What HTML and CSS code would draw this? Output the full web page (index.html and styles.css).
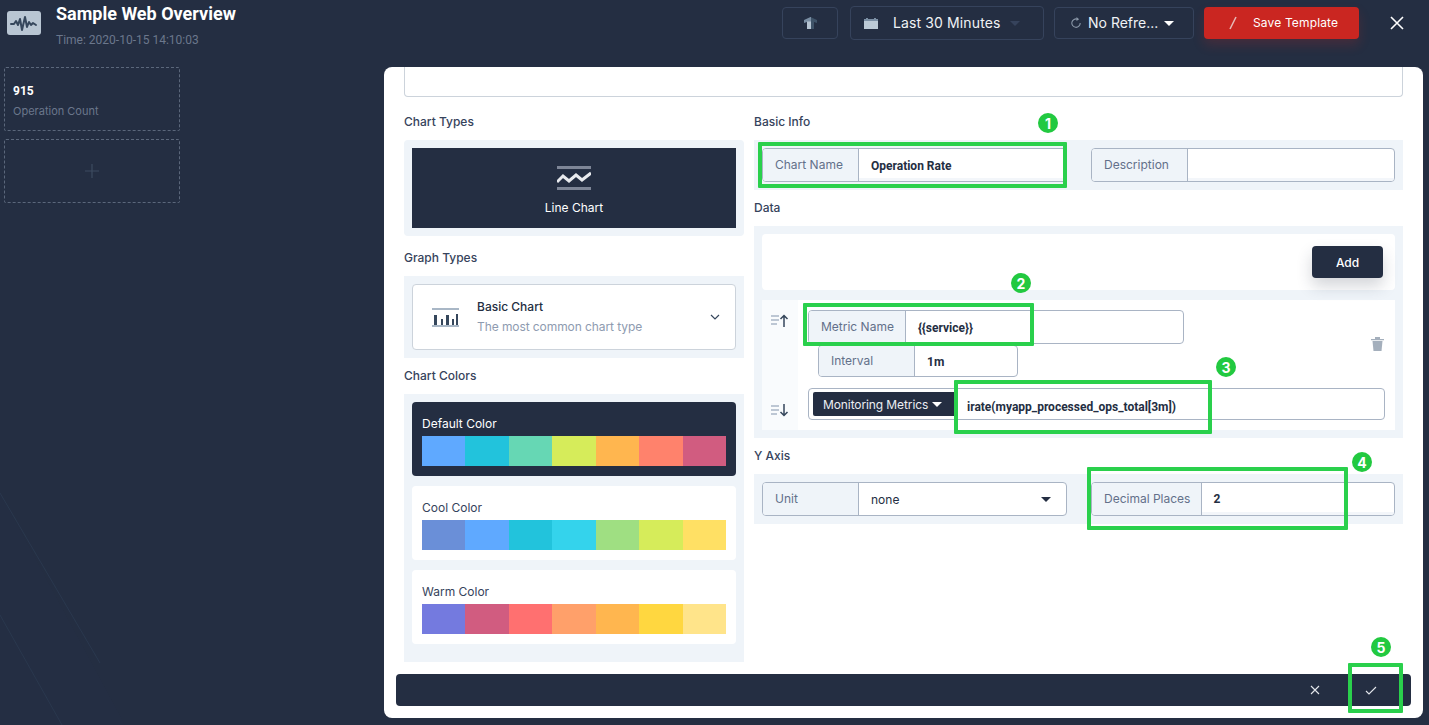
FILE: index.html
```html
<!DOCTYPE html>
<html lang="en">
<head>
  <meta charset="UTF-8">
  <title>Sample Web Overview</title>
  <link rel="stylesheet" href="styles.css">
</head>
<body>

  <!-- faint diagonal lines behind the page -->
  <svg class="bg-lines" width="380" height="260" viewBox="0 0 380 260">
    <polygon points="0,28 125,260 0,260" fill="#25304a" opacity="0.15"/>
    <line x1="0" y1="28" x2="100" y2="198" stroke="#2a384e"/>
    <line x1="0" y1="150" x2="62" y2="260" stroke="#2a384e"/>
  </svg>

  <header class="topbar">
    <div class="brand">
      <span class="brand-logo">
        <svg width="34" height="24" viewBox="0 0 34 24">
          <rect width="34" height="24" rx="3" fill="#b9c6d3"/>
          <path d="M4 13h3l2-3 2 4 2-6 2 11 3-13 2 10 2-5 2 3 2-2 3 2" fill="none" stroke="#36475c" stroke-width="2" stroke-linecap="round" stroke-linejoin="round"/>
        </svg>
      </span>
      <div>
        <h1 class="brand-title">Sample Web Overview</h1>
        <p class="brand-time">Time: 2020-10-15 14:10:03</p>
      </div>
    </div>
    <div class="actions">
      <button class="tool-btn upload-btn">
        <svg width="13" height="12" viewBox="0 0 13 12">
          <path d="M6.500 0L13 3v3l-3-1v7H6.500z" fill="#3f5368"/>
          <path d="M6.500 0L0 3v3l3-1v1h4V0z" fill="#7a8ea3"/>
          <path d="M3 4.500h4V12H3z" fill="#b6c4d2"/>
        </svg>
      </button>
      <button class="tool-btn time-btn">
        <svg width="14" height="11" viewBox="0 0 14 11">
          <path d="M2 0h2v2H2zM10 0h2v2h-2z" fill="#7a8ea3"/>
          <rect y="1" width="14" height="2" fill="#7a8ea3"/>
          <rect y="3" width="14" height="8" fill="#bccad6"/>
        </svg>
        <span class="time-text">Last 30 Minutes</span>
        <span class="caret caret-dim"></span>
      </button>
      <button class="tool-btn refresh-btn">
        <svg width="12" height="12" viewBox="0 0 12 12">
          <path d="M7.500 2.200A4.200 4.200 0 1 0 10.200 6" fill="none" stroke="#8a97a8" stroke-width="1.1"/>
          <path d="M6.500 0l2.600 2.200L6.500 4z" fill="#8a97a8"/>
        </svg>
        <span class="btn-text">No Refre...</span>
        <span class="caret"></span>
      </button>
      <button class="save-btn">
        <svg width="10" height="14" viewBox="0 0 10 14">
          <path d="M8 1L2 13" stroke="#e6b9b6" stroke-width="1.6"/>
        </svg>
        <span class="btn-text">Save Template</span>
      </button>
      <button class="close-btn">
        <svg width="16" height="16" viewBox="0 0 16 16">
          <path d="M2 2l12 12M14 2L2 14" stroke="#fff" stroke-width="1.6"/>
        </svg>
      </button>
    </div>
  </header>

  <main class="main">
    <aside class="sidebar">
      <div class="side-card">
        <strong class="side-num">915</strong>
        <span class="side-name">Operation Count</span>
      </div>
      <div class="side-card side-add">
        <svg width="16" height="16" viewBox="0 0 16 16">
          <path d="M8 1v14M1 8h14" stroke="#3d4b60" stroke-width="1.2"/>
        </svg>
      </div>
    </aside>

    <section class="modal">
      <div class="top-input"></div>

      <div class="modal-body">
        <div class="col-left">
          <h3 class="section-title">Chart Types</h3>
          <div class="panel panel-round">
            <div class="type-card">
              <svg width="34" height="24" viewBox="0 0 34 24">
                <rect width="34" height="3" fill="#7d8596"/>
                <rect y="21" width="34" height="3" fill="#7d8596"/>
                <path d="M0 16l6-6 6 5 7-6 6 5 9-7" fill="none" stroke="#e8eaee" stroke-width="3"/>
              </svg>
              <span>Line Chart</span>
            </div>
          </div>

          <h3 class="section-title title-graph">Graph Types</h3>
          <div class="panel">
            <div class="graph-card">
              <svg class="graph-icon" width="27" height="19" viewBox="0 0 27 19">
                <rect width="27" height="2" fill="#a9b7c6"/>
                <rect y="17" width="27" height="2" fill="#a9b7c6"/>
                <path d="M2 7h3v10H2zM9 11h2v6H9zM14 7h3v10h-3zM20 11h2v6h-2zM24 6h2v11h-2z" fill="#36475c"/>
              </svg>
              <div class="graph-text">
                <span class="graph-name">Basic Chart</span>
                <span class="graph-desc">The most common chart type</span>
              </div>
              <svg width="10" height="6" viewBox="0 0 10 6">
                <path d="M1 1l4 4 4-4" fill="none" stroke="#36475c" stroke-width="1.2"/>
              </svg>
            </div>
          </div>

          <h3 class="section-title">Chart Colors</h3>
          <div class="panel panel-colors">
            <div class="color-card color-card-on">
              <span class="color-name">Default Color</span>
              <div class="swatches">
                <i class="sw-blue"></i><i class="sw-teal"></i><i class="sw-mint"></i><i class="sw-lime"></i><i class="sw-orange"></i><i class="sw-coral"></i><i class="sw-rose"></i>
              </div>
            </div>
            <div class="color-card">
              <span class="color-name">Cool Color</span>
              <div class="swatches">
                <i class="sw-steel"></i><i class="sw-blue"></i><i class="sw-teal"></i><i class="sw-cyan"></i><i class="sw-green"></i><i class="sw-lime"></i><i class="sw-yellow"></i>
              </div>
            </div>
            <div class="color-card">
              <span class="color-name">Warm Color</span>
              <div class="swatches">
                <i class="sw-violet"></i><i class="sw-rose"></i><i class="sw-red"></i><i class="sw-peach"></i><i class="sw-orange"></i><i class="sw-gold"></i><i class="sw-cream"></i>
              </div>
            </div>
          </div>
        </div>

        <div class="col-right">
          <h3 class="section-title">Basic Info</h3>
          <div class="panel field-row">
            <div class="field">
              <span class="field-label">Chart Name</span>
              <span class="field-value value-input">Operation Rate</span>
            </div>
            <div class="field">
              <span class="field-label">Description</span>
              <span class="field-value value-input"></span>
            </div>
          </div>

          <h3 class="section-title">Data</h3>
          <div class="panel panel-data">
            <div class="add-row">
              <button class="add-btn">Add</button>
            </div>
            <div class="metric-row">
              <div class="sort-strip">
                <svg width="18" height="13" viewBox="0 0 18 13">
                  <path d="M0 2h8M0 6h8M0 10h6" stroke="#a9b7c6" stroke-width="1.4"/>
                  <path d="M13 13V2M9.500 5L13 1.500 16.500 5" fill="none" stroke="#36475c" stroke-width="1.5"/>
                </svg>
                <svg width="18" height="13" viewBox="0 0 18 13">
                  <path d="M0 2h8M0 6h8M0 10h6" stroke="#a9b7c6" stroke-width="1.4"/>
                  <path d="M13 0v11M9.500 8l3.500 3.500L16.500 8" fill="none" stroke="#36475c" stroke-width="1.5"/>
                </svg>
              </div>
              <div class="metric-fields">
                <div class="metric-top">
                  <div class="metric-pair">
                    <div class="field field-metric">
                      <span class="field-label">Metric Name</span>
                      <span class="field-value">{{service}}</span>
                    </div>
                    <div class="field field-interval">
                      <span class="field-label">Interval</span>
                      <span class="field-value">1m</span>
                    </div>
                  </div>
                  <svg class="trash" width="13" height="14" viewBox="0 0 13 14">
                    <path d="M0 2h13v1.300H0zM4 0h5v2H4z" fill="#a4afbc"/>
                    <path d="M1.500 4h10l-1 10h-8z" fill="#a4afbc"/>
                  </svg>
                </div>
                <div class="field field-query">
                  <button class="query-btn">Monitoring Metrics <span class="caret"></span></button>
                  <span class="query-value">irate(myapp_processed_ops_total[3m])</span>
                </div>
              </div>
            </div>
          </div>

          <h3 class="section-title">Y Axis</h3>
          <div class="panel field-row">
            <div class="field">
              <span class="field-label">Unit</span>
              <span class="field-value value-select">none <span class="caret caret-dark"></span></span>
            </div>
            <div class="field">
              <span class="field-label">Decimal Places</span>
              <span class="field-value value-input value-num">2</span>
            </div>
          </div>
        </div>
      </div>

      <footer class="modal-foot">
        <svg width="10" height="10" viewBox="0 0 10 10">
          <path d="M1 1l8 8M9 1L1 9" stroke="#e4e7ec" stroke-width="1.1"/>
        </svg>
        <svg class="foot-ok" width="12" height="9" viewBox="0 0 12 9">
          <path d="M1 5l3 3 7-7" fill="none" stroke="#e4e7ec" stroke-width="1.1"/>
        </svg>
      </footer>

      <!-- green tutorial marks on top of the form -->
      <div class="mark mark-1"></div>
      <div class="mark mark-2"></div>
      <div class="mark mark-3"></div>
      <div class="mark mark-4"></div>
      <div class="mark mark-5"></div>
      <span class="badge badge-1">1</span>
      <span class="badge badge-2">2</span>
      <span class="badge badge-3">3</span>
      <span class="badge badge-4">4</span>
      <span class="badge badge-5">5</span>
    </section>
  </main>

</body>
</html>
```

FILE: styles.css
```css
* {
  box-sizing: border-box;
}

html, body {
  height: 100%;
}

body {
  margin: 0;
  background-color: #242e42;
  font-family: "Inter", "Liberation Sans", sans-serif;
  font-size: 12px;
  color: #242e42;
  overflow: hidden;
  position: relative;
}

button {
  font-family: inherit;
  cursor: pointer;
}

svg {
  display: block;
  flex: none;
}

.bg-lines {
  position: absolute;
  left: 0;
  bottom: 0;
}

/* top bar */
.topbar {
  position: relative;
  height: 67px;
  display: flex;
  justify-content: space-between;
  align-items: flex-start;
  padding-left: 7px;
}

.brand {
  display: flex;
  gap: 15px;
}

.brand-logo {
  margin-top: 11px;
}

.brand-title {
  margin: 3px 0 0;
  font-family: "Roboto", sans-serif;
  font-size: 18px;
  line-height: 22px;
  font-weight: 700;
  color: #fff;
}

.brand-time {
  margin: 7px 0 0;
  font-family: "Roboto", sans-serif;
  font-size: 12px;
  line-height: 16px;
  color: #6b778c;
}

.actions {
  display: flex;
  align-items: center;
  height: 46px;
}

.tool-btn {
  height: 32px;
  display: flex;
  align-items: center;
  background: transparent;
  border: 1px solid #36435c;
  border-radius: 4px;
  color: #f0f2f5;
  font-size: 14px;
  padding: 0;
}

.upload-btn {
  width: 56px;
  justify-content: center;
  margin-right: 12px;
}

.time-btn {
  width: 194px;
  height: 34px;
  padding-left: 13px;
  margin-right: 10px;
}

.time-text {
  margin: 0 10px 2px 15px;
  letter-spacing: 0.12px;
}

.btn-text {
  margin-bottom: 2px;
}

.refresh-btn {
  width: 140px;
  padding-left: 15px;
  gap: 6px;
  margin-right: 10px;
}

.save-btn {
  width: 155px;
  height: 32px;
  display: flex;
  align-items: center;
  gap: 15px;
  padding: 0 0 0 24px;
  border: none;
  border-radius: 4px;
  background-color: #ca2621;
  color: #fff;
  font-size: 12px;
  letter-spacing: 0.15px;
  box-shadow: 0 6px 12px rgba(202, 38, 33, 0.2);
}

.close-btn {
  width: 16px;
  height: 16px;
  padding: 0;
  margin: 0 24px 0 30px;
  background: none;
  border: none;
}

.caret {
  display: inline-block;
  width: 0;
  height: 0;
  border-left: 5px solid transparent;
  border-right: 5px solid transparent;
  border-top: 5px solid #fff;
}

.caret-dim {
  border-top-color: #36435c;
}

.caret-dark {
  border-top-color: #242e42;
}

/* page body */
.main {
  position: relative;
  height: 651px;
  display: flex;
  justify-content: space-between;
  padding: 0 6px 0 4px;
}

.sidebar {
  width: 176px;
  display: flex;
  flex-direction: column;
  gap: 8px;
}

.side-card {
  height: 64px;
  border: 1px dashed #5b677b;
  border-radius: 2px;
  padding: 15px 8px 0;
  display: flex;
  flex-direction: column;
  gap: 5px;
}

.side-num {
  color: #fff;
  font-family: "Roboto", sans-serif;
  font-size: 12px;
  line-height: 16px;
}

.side-name {
  color: #6b778c;
  font-size: 11px;
  line-height: 14px;
}

.side-add {
  padding: 0;
  align-items: center;
  justify-content: center;
}

/* modal */
.modal {
  position: relative;
  width: 1039px;
  height: 651px;
  display: flex;
  flex-direction: column;
  background-color: #fff;
  border-radius: 8px;
}

.top-input {
  height: 30px;
  margin: 0 20px;
  border: 1px solid #ccd3db;
  border-top: none;
  border-radius: 0 0 4px 4px;
}

.modal-body {
  flex: 1;
  display: grid;
  grid-template-columns: 340px 649px;
  column-gap: 10px;
  padding: 7px 20px 0;
}

.section-title {
  margin: 9px 0 9px;
  font-size: 12px;
  line-height: 18px;
  font-weight: 500;
  color: #36435c;
}

.title-graph {
  margin-top: 13px;
}

.panel {
  background-color: #eff4f9;
  padding: 8px;
}

.panel-round {
  border-radius: 4px;
}

.type-card {
  height: 80px;
  display: flex;
  flex-direction: column;
  align-items: center;
  padding-top: 18px;
  gap: 10px;
  background-color: #242e42;
  color: #fff;
}

.graph-card {
  height: 66px;
  display: flex;
  align-items: center;
  padding: 0 15px 0 19px;
  background-color: #fff;
  border: 1px solid #ccd3db;
  border-radius: 4px;
}

.graph-text {
  flex: 1;
  display: flex;
  flex-direction: column;
  gap: 5px;
  margin: 0 0 2px 18px;
  line-height: 15px;
}

.graph-name {
  font-weight: 500;
}

.graph-desc {
  color: #8e9bb0;
  letter-spacing: -0.08px;
}

.panel-colors {
  height: 268px;
  display: flex;
  flex-direction: column;
  gap: 10px;
}

.color-card {
  height: 74px;
  padding: 13px 10px 0;
  background-color: #fff;
  border-radius: 4px;
  color: #36435c;
}

.color-card-on {
  background-color: #242e42;
  color: #fff;
}

.color-name {
  display: block;
  line-height: 17px;
  margin-bottom: 4px;
}

.swatches {
  display: flex;
  height: 30px;
}

.swatches i {
  flex: 1;
}

.sw-blue { background-color: #5fa9ff; }
.sw-teal { background-color: #22c3dc; }
.sw-mint { background-color: #66d7b4; }
.sw-lime { background-color: #d6ec5a; }
.sw-orange { background-color: #ffb64f; }
.sw-coral { background-color: #ff826c; }
.sw-rose { background-color: #d15c80; }
.sw-steel { background-color: #6a8fd8; }
.sw-cyan { background-color: #34d3ec; }
.sw-green { background-color: #9fdf82; }
.sw-yellow { background-color: #ffe064; }
.sw-violet { background-color: #747adf; }
.sw-red { background-color: #ff7070; }
.sw-peach { background-color: #ffa06a; }
.sw-gold { background-color: #ffd740; }
.sw-cream { background-color: #ffe48a; }

/* form fields */
.field-row {
  height: 50px;
  display: grid;
  grid-template-columns: 305px 304px;
  column-gap: 24px;
}

.field {
  height: 34px;
  display: flex;
  background-color: #fff;
  border: 1px solid #a9b4c4;
  border-radius: 4px;
  overflow: hidden;
}

.field-label {
  min-width: 96px;
  display: flex;
  align-items: center;
  padding: 0 11px 2px 12px;
  background-color: #eff4f9;
  border-right: 1px solid #a9b4c4;
  color: #63708a;
  white-space: nowrap;
}

.field-value {
  flex: 1;
  display: flex;
  align-items: center;
  padding: 2px 0 0 12px;
  font-family: "Roboto", sans-serif;
  font-weight: 700;
  color: #242e42;
}

.value-input {
  box-shadow: inset 0 -3px 0 #f3f6fa;
}

.value-select {
  justify-content: space-between;
  padding: 0 15px 0 12px;
  font-weight: 400;
  font-family: "Inter", sans-serif;
}

.value-num {
  padding: 0 0 0 11px;
}

.panel-data {
  height: 212px;
}

.add-row {
  height: 56px;
  display: flex;
  justify-content: flex-end;
  align-items: center;
  padding-right: 12px;
  background-color: #fff;
  border-radius: 4px;
}

.add-btn {
  width: 71px;
  height: 32px;
  border: none;
  border-radius: 4px;
  background-color: #242e42;
  color: #fff;
  font-size: 12px;
  font-weight: 500;
  box-shadow: 0 8px 16px rgba(36, 46, 66, 0.2);
}

.metric-row {
  height: 130px;
  margin-top: 10px;
  display: flex;
  background-color: #fff;
}

.sort-strip {
  width: 36px;
  display: flex;
  flex-direction: column;
  justify-content: space-between;
  align-items: center;
  padding: 14px 0 13px;
  background-color: #f9fbfd;
}

.metric-fields {
  flex: 1;
  padding: 10px 10px 0;
}

.metric-top {
  display: flex;
  justify-content: space-between;
  align-items: center;
}

.metric-pair {
  display: flex;
  flex-direction: column;
  gap: 1px;
}

.field-metric {
  width: 376px;
}

.field-interval {
  width: 200px;
  height: 32px;
  margin-left: 10px;
}

.trash {
  margin-right: 1px;
}

.field-query {
  height: 32px;
  margin-top: 11px;
  align-items: center;
  padding-left: 4px;
}

.query-btn {
  width: 143px;
  height: 24px;
  display: flex;
  align-items: center;
  gap: 4px;
  padding: 0 0 0 10px;
  border: none;
  border-radius: 2px;
  background-color: #242e42;
  color: #eceff3;
  font-size: 12px;
  letter-spacing: -0.1px;
}

.query-value {
  margin: 5px 0 0 11px;
  font-family: "Roboto", sans-serif;
  font-weight: 700;
  color: #242e42;
}

/* footer bar */
.modal-foot {
  height: 32px;
  margin: 0 12px 12px;
  display: flex;
  justify-content: flex-end;
  align-items: center;
  gap: 45px;
  padding-right: 34px;
  background-color: #242e42;
  border-radius: 4px;
}

/* tutorial marks */
.mark {
  position: absolute;
  border: 4px solid #2ad04c;
  border-radius: 1px;
}

.mark-1 { left: 374px; top: 75px; width: 309px; height: 46px; }
.mark-2 { left: 419px; top: 236px; width: 231px; height: 43px; }
.mark-3 { left: 570px; top: 313px; width: 258px; height: 54px; }
.mark-4 { left: 703px; top: 400px; width: 261px; height: 63px; }
.mark-5 { left: 964px; top: 596px; width: 55px; height: 50px; }

.badge {
  position: absolute;
  width: 20px;
  height: 20px;
  display: flex;
  align-items: center;
  justify-content: center;
  border-radius: 50%;
  background-color: #22c940;
  color: #fff;
  font-size: 14px;
  font-weight: 700;
}

.badge-1 { left: 654px; top: 46px; }
.badge-2 { left: 627px; top: 206px; }
.badge-3 { left: 832px; top: 290px; }
.badge-4 { left: 968px; top: 385px; }
.badge-5 { left: 987px; top: 570px; }
```
